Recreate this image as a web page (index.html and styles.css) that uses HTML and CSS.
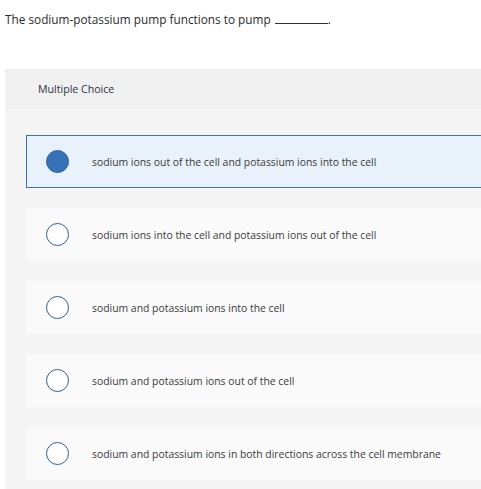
FILE: index.html
```html
<!DOCTYPE html>
<html>
<head>
<meta charset="utf-8">
<link rel="stylesheet" href="styles.css">
</head>
<body>
<div class="page">
  <p class="question">The sodium-potassium pump functions to pump <span class="blank"></span>.</p>
  <section class="panel">
    <div class="panel-header">Multiple Choice</div>
    <div class="options">
      <div class="option selected"><span class="radio"></span><span class="label">sodium ions out of the cell and potassium ions into the cell</span></div>
      <div class="option"><span class="radio"></span><span class="label">sodium ions into the cell and potassium ions out of the cell</span></div>
      <div class="option"><span class="radio"></span><span class="label">sodium and potassium ions into the cell</span></div>
      <div class="option"><span class="radio"></span><span class="label">sodium and potassium ions out of the cell</span></div>
      <div class="option"><span class="radio"></span><span class="label">sodium and potassium ions in both directions across the cell membrane</span></div>
    </div>
  </section>
</div>
</body>
</html>
```

FILE: styles.css
```css
html, body {
  margin: 0;
  padding: 0;
  background: #ffffff;
  overflow: hidden;
}
body {
  font-family: "Open Sans", "Liberation Sans", sans-serif;
  color: #333333;
}
.page {
  width: 100%;
}
.question {
  margin: 0;
  padding: 11px 0 0 5px;
  height: 69px;
  box-sizing: border-box;
  font-size: 11.8px;
  line-height: 16px;
  color: #2b2b2b;
}
.blank {
  display: inline-block;
  width: 53px;
  height: 1px;
  margin-left: 1px;
  border-bottom: 1px solid #333;
  vertical-align: baseline;
}
.panel {
  margin-left: 5px;
  background: #f5f5f5;
  padding-bottom: 20px;
}
.panel-header {
  height: 40px;
  display: flex;
  align-items: center;
  padding-left: 33px;
  background: #f0f0f0;
  font-size: 10.6px;
  color: #2e3440;
}
.options {
  display: flex;
  flex-direction: column;
  gap: 20px;
  padding: 26px 0 0 21px;
}
.option {
  height: 53px;
  box-sizing: border-box;
  display: flex;
  align-items: center;
  padding-left: 19px;
  border: 1px solid transparent;
  border-right-width: 0;
  background: #fafafa;
  font-size: 10.4px;
  color: #3a3a3a;
}
.option.selected {
  border-color: #3b73b9;
  background: #e9f1fb;
}
.radio {
  width: 23px;
  height: 23px;
  box-sizing: border-box;
  border-radius: 50%;
  border: 1.5px solid #2f5f96;
  background: #ffffff;
  flex: none;
  margin-right: 23px;
}
.selected .radio {
  background: #3771b6;
  border-color: #2f64a3;
}
```
